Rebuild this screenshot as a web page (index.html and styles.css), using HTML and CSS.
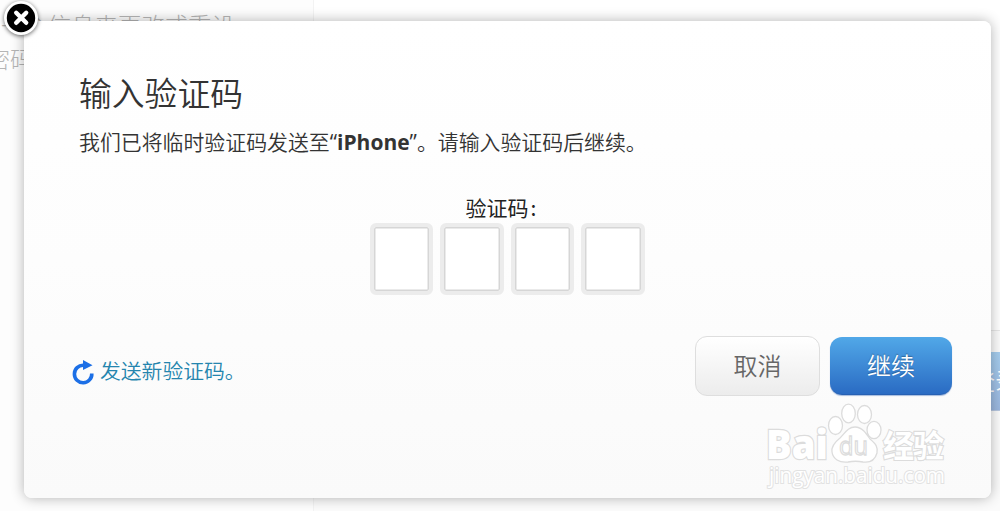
FILE: index.html
```html
<!DOCTYPE html>
<html lang="zh-CN">
<head>
  <meta charset="UTF-8" />
  <meta name="viewport" content="width=device-width, initial-scale=1.0"/>
  <title>输入验证码</title>
  <link rel="stylesheet" href="styles.css">
</head>
<body>
  <!-- page behind the dialog -->
  <div class="page">
    <div class="sidebar">
      <p class="line-one">一个信息来更改或重设</p>
      <p class="line-two">密码</p>
    </div>
    <div class="content">
      <p class="intro">请输入您的信息以验证您的身份后继续</p>
      <div class="page-footer">
        <span class="page-btn">登录</span>
      </div>
    </div>
  </div>

  <div class="dialog">
    <button class="close-btn" type="button" aria-label="关闭">
      <svg width="38" height="38" viewBox="0 0 38 38">
        <circle cx="19" cy="19" r="17" fill="#fff"/>
        <circle cx="19" cy="19" r="14.2" fill="#000"/>
        <path d="M14.2 13.8L24.2 23.8M24.2 13.8L14.2 23.8" stroke="#fff" stroke-width="4.4" stroke-linecap="round"/>
      </svg>
    </button>

    <h1>输入验证码</h1>
    <p class="message">我们已将临时验证码发送至<span class="quote">“</span><strong>iPhone</strong><span class="quote">”</span>。请输入验证码后继续。</p>

    <form class="code-form">
      <label for="digit1">验证码<span class="colon">:</span></label>
      <div class="digits">
        <input type="text" id="digit1" maxlength="1" />
        <input type="text" maxlength="1" />
        <input type="text" maxlength="1" />
        <input type="text" maxlength="1" />
      </div>
    </form>

    <div class="actions">
      <a class="resend" href="#">
        <svg width="24" height="26" viewBox="0 0 24 26">
          <path d="M13 6.3H11.500A8.700 8.700 0 1 0 19.800 14.500" fill="none" stroke="#1c6fe6" stroke-width="3.6"/>
          <path d="M11 1L20.500 6.3L11 11Z" fill="#1c6fe6"/>
        </svg>
        <span>发送新验证码。</span>
      </a>
      <div class="buttons">
        <button class="btn cancel" type="button">取消</button>
        <button class="btn continue" type="button">继续</button>
      </div>
    </div>

    <svg class="watermark" width="190" height="94" viewBox="0 0 190 94">
      <g fill="#fff" stroke="#dcdcdc" stroke-width="1.3">
        <text class="wm-logo" x="4" y="62" textLength="62" lengthAdjust="spacingAndGlyphs">Bai</text>
        <ellipse cx="73.5" cy="28.5" rx="7" ry="9"/>
        <ellipse cx="86.5" cy="16.5" rx="6.8" ry="9.3"/>
        <ellipse cx="102.5" cy="17.5" rx="7" ry="9"/>
        <ellipse cx="112" cy="33" rx="7" ry="8.7"/>
        <path d="M93 30C100 30 104 36 108 42C114 47 116 50 115 56C113 63 108 66 101 65C96 64 91 64 86 65C77 66 71 62 70 55C69 49 73 45 78 41C83 36 86 30 93 30Z"/>
        <text class="wm-du" x="77" y="58" textLength="29" lengthAdjust="spacingAndGlyphs">du</text>
        <text class="wm-cjk" x="121" y="60" textLength="61">经验</text>
        <text class="wm-url" x="7" y="86" textLength="176" lengthAdjust="spacingAndGlyphs">jingyan.baidu.com</text>
      </g>
    </svg>
  </div>
</body>
</html>
```

FILE: styles.css
```css
* {
  box-sizing: border-box;
}

body {
  font-family: "Noto Sans CJK SC", sans-serif;
  font-weight: 350;
  background: #fff;
  color: #333;
  margin: 0;
  height: 511px;
  overflow: hidden;
  position: relative;
}

p, h1 {
  margin: 0;
}

.page {
  display: flex;
  height: 511px;
  overflow: hidden;
}

.sidebar {
  width: 314px;
  padding-top: 9px;
  background: #fdfdfd;
  border-right: 1px solid #f3f3f3;
  font-size: 23.4px;
  font-weight: 300;
  line-height: 33px;
  color: #b5b5b5;
  white-space: nowrap;
}

.line-one {
  padding-left: 1px;
}

.line-two {
  margin-left: -13px;
  font-size: 23px;
}

.content {
  flex: 1;
  min-width: 0;
  display: flex;
  flex-direction: column;
  justify-content: space-between;
}

.intro {
  padding: 20px 0 0 112px;
  font-size: 19px;
  line-height: 24px;
  color: #bbb;
}

.page-footer {
  height: 181px;
  display: flex;
  justify-content: flex-end;
  align-items: flex-start;
  padding-top: 21px;
  background: #fbfbfb;
  border-top: 1px solid #e8e8e8;
}

.page-btn {
  width: 100px;
  height: 59px;
  margin-right: -45px;
  background: linear-gradient(#a5cdee, #9bb7df);
  border-bottom: 1px solid #b8c8e0;
  color: #fff;
  font-size: 24px;
  line-height: 56px;
  text-align: center;
}

.dialog {
  position: absolute;
  left: 24px;
  top: 21px;
  width: 967px;
  height: 477px;
  padding: 46px 39px 0 55px;
  background: linear-gradient(#fff, #fdfdfd 50%, #fafafa);
  border-radius: 8px;
  box-shadow: 0 0 13px rgba(0, 0, 0, 0.3);
}

.close-btn {
  position: absolute;
  left: -22px;
  top: -22px;
  width: 38px;
  height: 38px;
  padding: 0;
  border: none;
  background: none;
  cursor: pointer;
}

.close-btn svg {
  display: block;
  filter: drop-shadow(0 1px 2px rgba(0, 0, 0, 0.6));
}

h1 {
  font-size: 32.8px;
  line-height: 50px;
  font-weight: 350;
}

.message {
  margin-top: 9px;
  font-size: 20.9px;
  line-height: 30px;
}

.message strong {
  font-family: "Open Sans", sans-serif;
  font-weight: 700;
  font-size: 21px;
}

.quote {
  font-family: "Open Sans", sans-serif;
  font-weight: 400;
}

.code-form {
  display: flex;
  flex-direction: column;
  align-items: center;
  margin: 35px 17px 0 0;
}

label {
  margin-right: 12px;
  font-size: 21px;
  font-weight: 400;
  line-height: 31px;
  color: #222;
}

.colon {
  padding-left: 2px;
}

.digits {
  display: flex;
  gap: 7px;
}

.digits input {
  width: 63.5px;
  height: 72px;
  padding: 0;
  background: #fff;
  border: 4px solid #ececec;
  border-radius: 6px;
  box-shadow: inset 0 0 0 1.5px #d6d6d6;
  font-size: 36px;
  text-align: center;
}

.actions {
  display: flex;
  justify-content: space-between;
  align-items: center;
  margin: 41px 0 0 -7px;
}

.resend {
  display: flex;
  align-items: center;
  gap: 4px;
  padding-top: 11px;
  font-size: 20.8px;
  color: #2585ae;
  text-decoration: none;
}

.resend span {
  margin-top: -3px;
}

.buttons {
  display: flex;
  gap: 10px;
}

.btn {
  height: 60px;
  padding: 0 0 3px;
  border-radius: 12px;
  font-family: inherit;
  font-size: 24px;
  font-weight: 350;
  cursor: pointer;
}

.cancel {
  width: 125px;
  background: linear-gradient(#fff, #ececec);
  border: 1px solid #dedede;
  color: #666;
}

.continue {
  width: 122px;
  height: 58px;
  margin-top: 1px;
  background: linear-gradient(#51a8e8, #2a6bc3);
  border: none;
  border-bottom: 1px solid #2660b3;
  color: #fff;
  box-shadow: 0 1px 1px #a5bbdd;
  text-shadow: 0 -1px 1px rgba(0, 0, 0, 0.3);
}

.watermark {
  position: absolute;
  left: 738px;
  top: 376px;
}

.wm-logo {
  font-family: "Open Sans", sans-serif;
  font-weight: 800;
  font-size: 41px;
  stroke-width: 2.4px;
  paint-order: stroke;
}

.wm-du {
  font-family: "Open Sans", sans-serif;
  font-weight: 400;
  font-size: 26px;
}

.wm-cjk {
  font-weight: 700;
  font-size: 31px;
  stroke-width: 2.2px;
  paint-order: stroke;
}

.wm-url {
  font-family: "Open Sans", sans-serif;
  font-weight: 400;
  font-size: 21px;
  stroke: #e2e2e2;
  stroke-width: 2px;
  paint-order: stroke;
}
```
